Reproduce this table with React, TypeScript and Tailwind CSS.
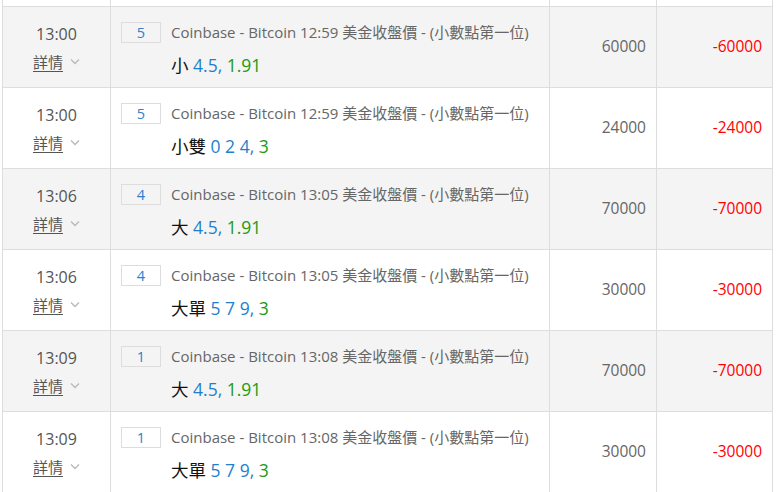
import React from "react";

type Row = {
  time: string;
  n: number;
  t: string;
  pick: string;
  nums: string;
  odds: string;
  amt: string;
  res: string;
};

const rows: Row[] = [
  { time: "13:00", n: 5, t: "12:59", pick: "小", nums: "4.5,", odds: "1.91", amt: "60000", res: "-60000" },
  { time: "13:00", n: 5, t: "12:59", pick: "小雙", nums: "0 2 4,", odds: "3", amt: "24000", res: "-24000" },
  { time: "13:06", n: 4, t: "13:05", pick: "大", nums: "4.5,", odds: "1.91", amt: "70000", res: "-70000" },
  { time: "13:06", n: 4, t: "13:05", pick: "大單", nums: "5 7 9,", odds: "3", amt: "30000", res: "-30000" },
  { time: "13:09", n: 1, t: "13:08", pick: "大", nums: "4.5,", odds: "1.91", amt: "70000", res: "-70000" },
  { time: "13:09", n: 1, t: "13:08", pick: "大單", nums: "5 7 9,", odds: "3", amt: "30000", res: "-30000" },
];

const font = { fontFamily: '"Open Sans", "Noto Sans CJK TC", sans-serif' };

function Chevron() {
  return (
    <svg width="10" height="7" viewBox="0 0 10 7" className="ml-[7px] mt-[-2px]">
      <path d="M1 1.5 L5 5.5 L9 1.5" fill="none" stroke="#b8b8b8" strokeWidth="1.3" />
    </svg>
  );
}

export default function App() {
  return (
    <div className="w-[778px] h-[492px] overflow-hidden bg-white" style={font}>
      <div className="ml-[2px] w-[771px]">
        <div className="grid grid-cols-[108px_439px_107px_117px] h-[6px]">
          <div className="border-l border-[#dddddd]" />
          <div className="border-l border-[#dddddd]" />
          <div className="border-l border-[#dddddd]" />
          <div className="border-l border-r border-[#dddddd]" />
        </div>
        {rows.map((r, i) => (
          <div
            key={i}
            className={`grid grid-cols-[108px_439px_107px_117px] h-[81px] border-t border-[#dddddd] ${
              i % 2 === 0 ? "bg-[#f4f4f4]" : "bg-white"
            }`}
          >
            <div className="border-l border-[#dddddd] flex flex-col items-center pt-[17px]">
              <div className="text-[16px] leading-[20px] text-[#555555]">{r.time}</div>
              <div className="mt-[8px] flex items-center">
                <span className="text-[15px] leading-[20px] text-[#555555] underline underline-offset-[3px]">詳情</span>
                <Chevron />
              </div>
            </div>
            <div className="border-l border-[#dddddd] pl-[10px] pt-[15px] flex">
              <div className="w-[40px] h-[21px] border border-[#dddddd] flex items-center justify-center text-[14.5px] text-[#2b7fcf] shrink-0">
                {r.n}
              </div>
              <div className="ml-[10px]">
                <div className="text-[15px] leading-[21px] text-[#666666] whitespace-nowrap">
                  Coinbase - Bitcoin {r.t} 美金收盤價 - (小數點第一位)
                </div>
                <div className="mt-[11px] text-[17.5px] leading-[22px] whitespace-nowrap">
                  <span className="text-[#111111]">{r.pick}</span>{" "}
                  <span className="text-[#1f7fcc]">{r.nums}</span>{" "}
                  <span className="text-[#229a12]">{r.odds}</span>
                </div>
              </div>
            </div>
            <div className="border-l border-[#dddddd] flex items-center justify-end pr-[10px] text-[15.5px] text-[#666666]">
              {r.amt}
            </div>
            <div className="border-l border-r border-[#dddddd] flex items-center justify-end pr-[10px] text-[15.5px] text-[#ff0000]">
              {r.res}
            </div>
          </div>
        ))}
      </div>
    </div>
  );
}
